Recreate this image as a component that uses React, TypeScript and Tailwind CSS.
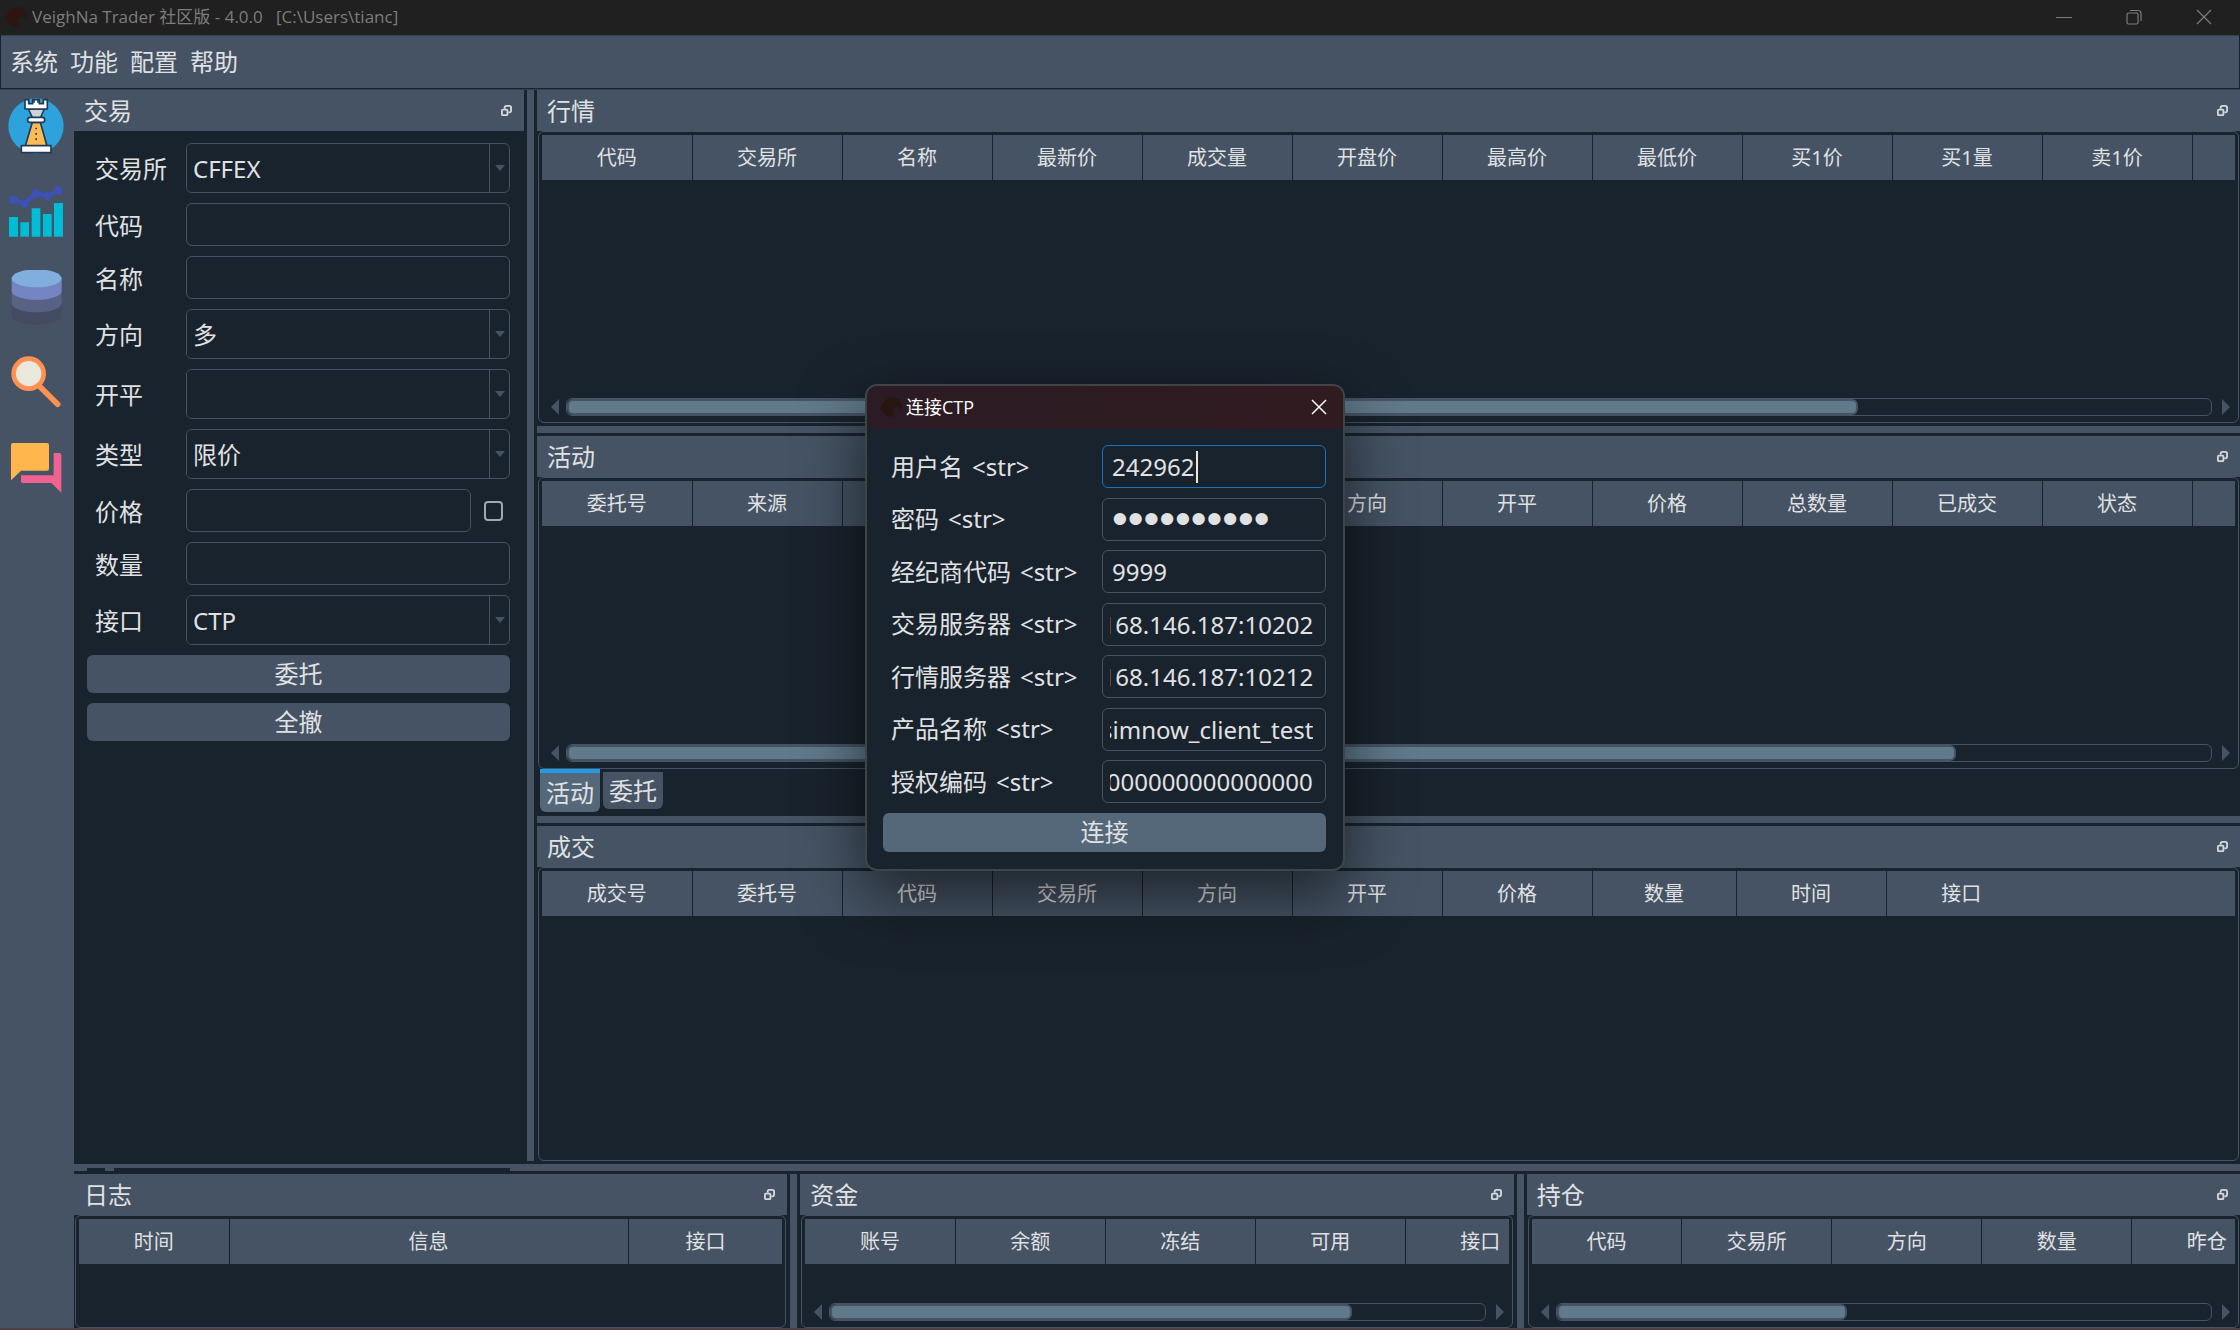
import { useEffect, useRef } from 'react';
import type { ReactNode } from 'react';

type Column = { name: string; width?: number; last?: boolean };

// Most columns share the same default width
const cols = (names: string[]): Column[] => names.map((name) => ({ name, width: 150 }));

const MENUS = ['系统', '功能', '配置', '帮助'];

const TICK_COLUMNS = cols([
  '代码', '交易所', '名称', '最新价', '成交量', '开盘价', '最高价', '最低价', '买1价', '买1量', '卖1价', '',
]);

const ACTIVE_COLUMNS = cols([
  '委托号', '来源', '', '', '', '方向', '开平', '价格', '总数量', '已成交', '状态', '',
]);

const TRADE_COLUMNS: Column[] = [
  ...cols(['成交号', '委托号', '代码', '交易所', '方向', '开平', '价格']),
  { name: '数量', width: 144 },
  { name: '时间', width: 150 },
  { name: '接口', width: 150, last: true },
  { name: '', last: true },
];

const LOG_COLUMNS: Column[] = [
  { name: '时间', width: 150 },
  { name: '信息', width: 399 },
  { name: '接口', last: true },
];

const ACCOUNT_COLUMNS = cols(['账号', '余额', '冻结', '可用', '接口']);
const POSITION_COLUMNS = cols(['代码', '交易所', '方向', '数量', '昨仓']);

const CTP_FIELDS = [
  { id: 'user', label: '用户名', value: '242962', type: 'text', focused: true },
  { id: 'password', label: '密码', value: 'abcdefghij', type: 'password' },
  { id: 'broker', label: '经纪商代码', value: '9999', type: 'text' },
  { id: 'td', label: '交易服务器', value: '180.168.146.187:10202', type: 'text' },
  { id: 'md', label: '行情服务器', value: '180.168.146.187:10212', type: 'text' },
  { id: 'product', label: '产品名称', value: 'simnow_client_test', type: 'text' },
  { id: 'auth', label: '授权编码', value: '0000000000000000', type: 'text' },
];

/* ---------- icons ---------- */

function HorseIcon({ className }: { className: string }) {
  return (
    <svg viewBox="0 0 24 20" className={className} fill="currentColor">
      <path d="M1 13c1-5 4-10 9-12 3-1 7-1 9 1l1-1 .5 3 3 5-1 2.500-2 .500-2-2.500-3 .500c-2 2-1 4-2 6l1 3c-3 1-6 1-9-2-1-1-2-2-2-4l-2 1 .500-2z" />
    </svg>
  );
}

function RookIcon() {
  return (
    <svg viewBox="0 0 168 168" className="h-14 w-14">
      <circle cx="84" cy="84" r="83" fill="#2ea2dc" />
      <g stroke="#1c3b54" strokeWidth="5" strokeLinejoin="round">
        <path d="M61 33h48L97 60H74z" fill="#d0d2d6" />
        <path d="M51 5h11v12h12V5h20v12h12V5h12v28H51z" fill="#fff" />
        <path d="M78 5v9M90 5v9" fill="none" />
        <path d="M73 73h24l20 71H52z" fill="#fdbb55" />
        <rect x="59" y="58" width="51" height="15" rx="7" fill="#fff" />
        <rect x="40" y="143" width="89" height="21" fill="#fff" />
      </g>
      <path d="M82 89h5v5h-5zM82 105h5v5h-5zM82 121h5v5h-5z" fill="#1c3b54" />
    </svg>
  );
}

function ChartIcon() {
  return (
    <svg viewBox="0 0 168 168" className="h-14 w-14">
      <path
        d="M3 99h27v59H3zM37 115h26v43H37zM71 73h26v85H71zM105 90h26v68h-26zM138 57h27v101h-27z"
        fill="#00bcd4"
      />
      <path d="M16 48l34 11 34-32 34 10 34-19" fill="none" stroke="#3f51b5" strokeWidth="13" strokeLinejoin="round" />
      <g fill="#3f51b5">
        <circle cx="16" cy="48" r="13" />
        <circle cx="50" cy="59" r="12" />
        <circle cx="84" cy="28" r="13" />
        <circle cx="118" cy="36" r="12" />
        <circle cx="151" cy="19" r="13" />
      </g>
    </svg>
  );
}

function DatabaseIcon() {
  return (
    <svg viewBox="0 0 168 168" className="h-14 w-14">
      <path d="M11 100v38a75 26 0 0 0 150 0v-38z" fill="#454b62" />
      <path d="M11 62v38a75 27 0 0 0 150 0V62z" fill="#586284" />
      <path d="M11 25v38a75 27 0 0 0 150 0V25z" fill="#7585c3" />
      <ellipse cx="86" cy="25" rx="75" ry="27" fill="#82aedd" />
    </svg>
  );
}

function MagnifierIcon() {
  return (
    <svg viewBox="0 0 168 168" className="h-14 w-14">
      <path d="M90 86l59 59" stroke="#ff9152" strokeWidth="17" strokeLinecap="round" />
      <circle cx="62" cy="53" r="45" fill="#eae8dc" stroke="#ff9152" strokeWidth="14" />
    </svg>
  );
}

function ChatIcon() {
  return (
    <svg viewBox="0 0 168 168" className="h-14 w-14">
      <path d="M137 33h17q6 0 6 6v113l-30-29H44q-5 0-5-5v-18h98z" fill="#f06292" />
      <path d="M15 3h102q6 0 6 6v71q0 6-6 6H39L9 115V9q0-6 6-6z" fill="#ffb74d" />
    </svg>
  );
}

function FloatIcon() {
  return (
    <svg viewBox="0 0 12 12" className="h-[11px] w-[11px]" fill="none" stroke="#d5d8dc" strokeWidth="2">
      <path d="M4 4V3q0-2 2-2h3q2 0 2 2v3q0 2-2 2H8" />
      <rect x="1" y="5" width="6" height="6" rx="1" />
    </svg>
  );
}

/* ---------- dock parts ---------- */

function DockTitle({ title }: { title: string }) {
  return (
    <div className="flex h-[41px] shrink-0 items-center justify-between bg-[#455364] pl-[10px] pr-3">
      <h2 className="text-[24px] leading-8">{title}</h2>
      <button type="button" aria-label={`浮动${title}`}>
        <FloatIcon />
      </button>
    </div>
  );
}

function ScrollBar({ percent }: { percent: number }) {
  return (
    <div className="flex items-center gap-[7px] pb-[6px] pl-[9px] pr-[5px]">
      <svg viewBox="0 0 8 16" className="h-4 w-2 shrink-0" fill="#455364">
        <path d="M8 0v16L0 8z" />
      </svg>
      <div className="h-[18px] flex-1 rounded-md border border-[#455364]">
        <div
          className="h-full rounded-md border-2 border-[#455364] bg-[#60798b]"
          style={{ width: `${percent}%` }}
        />
      </div>
      <svg viewBox="0 0 11 16" className="h-4 w-[11px] shrink-0" fill="#455364">
        <path d="M3 0v16l8-8z" />
      </svg>
    </div>
  );
}

function DataTable({ label, columns, scroll }: { label: string; columns: Column[]; scroll?: number }) {
  return (
    <div className="mx-px flex min-h-0 flex-1 flex-col overflow-hidden rounded-md border border-[#455364] px-[3px] pt-[3px]">
      <div className="min-h-0 flex-1 overflow-hidden">
        <table aria-label={label} className="w-full table-fixed border-collapse">
          <colgroup>
            {columns.map((c, i) => (
              <col key={i} style={c.width ? { width: c.width } : undefined} />
            ))}
          </colgroup>
          <thead>
            <tr className="h-[45px] bg-[#455364]">
              {columns.map((c, i) => (
                <th
                  key={i}
                  className={`p-0 text-[20px] leading-6 font-normal ${c.last ? '' : 'border-r border-[#19232d]'}`}
                >
                  {c.name}
                </th>
              ))}
            </tr>
          </thead>
        </table>
      </div>
      {scroll !== undefined && <ScrollBar percent={scroll} />}
    </div>
  );
}

function Dock({ title, columns, scroll, className, children }: {
  title: string;
  columns: Column[];
  scroll?: number;
  className: string;
  children?: ReactNode;
}) {
  return (
    <section className={`flex min-h-0 min-w-0 flex-col ${className}`}>
      <DockTitle title={title} />
      <DataTable label={title} columns={columns} scroll={scroll} />
      {children}
    </section>
  );
}

/* ---------- trading form ---------- */

const FIELD = 'h-[43px] min-w-0 flex-1 rounded-md border border-[#455364] bg-[#19232d] px-2 text-[24px] outline-none';

function Row({ id, label, children }: { id: string; label: string; children: ReactNode }) {
  return (
    <div className="flex items-center">
      <label htmlFor={id} className="w-[99px] shrink-0 pl-2 pt-[2px] text-[24px] leading-8">
        {label}
      </label>
      {children}
    </div>
  );
}

function Combo({ id, label, value }: { id: string; label: string; value: string }) {
  return (
    <Row id={id} label={label}>
      <div className="flex h-[50px] flex-1 overflow-hidden rounded-md border border-[#455364]">
        <select id={id} className="h-full flex-1 appearance-none bg-[#19232d] pl-[6px] pt-[2px] text-[24px] outline-none" defaultValue={value}>
          <option value={value}>{value}</option>
        </select>
        <span className="flex w-5 items-center justify-center border-l border-[#455364]">
          <svg viewBox="0 0 10 6" className="h-[6px] w-[10px]" fill="#455364">
            <path d="M0 0h10L5 6z" />
          </svg>
        </span>
      </div>
    </Row>
  );
}

function TradingWidget() {
  return (
    <section className="flex w-[450px] shrink-0 flex-col">
      <DockTitle title="交易" />
      <form className="flex flex-col gap-[10px] pl-[13px] pr-[14px] pt-3">
        <Combo id="exchange" label="交易所" value="CFFEX" />
        <Row id="symbol" label="代码">
          <input id="symbol" className={FIELD} />
        </Row>
        <Row id="name" label="名称">
          <input id="name" className={FIELD} />
        </Row>
        <Combo id="direction" label="方向" value="多" />
        <Combo id="offset" label="开平" value="" />
        <Combo id="order-type" label="类型" value="限价" />
        <Row id="price" label="价格">
          <input id="price" className={FIELD} />
          <input
            type="checkbox"
            aria-label="跟随最新价"
            className="ml-[13px] mr-[7px] h-5 w-[19px] appearance-none rounded border-2 border-[#9da9b5]"
          />
        </Row>
        <Row id="volume" label="数量">
          <input id="volume" className={FIELD} />
        </Row>
        <Combo id="gateway" label="接口" value="CTP" />
        <button type="button" className="h-[38px] rounded-md bg-[#455364] text-[24px] leading-8">委托</button>
        <button type="button" className="h-[38px] rounded-md bg-[#455364] text-[24px] leading-8">全撤</button>
      </form>
    </section>
  );
}

/* ---------- connect dialog ---------- */

function ConnectField({ id, label, value, type, focused }: (typeof CTP_FIELDS)[number]) {
  const ref = useRef<HTMLInputElement>(null);
  const long = value.length > 12;

  // Long values show their tail, where the cursor would be
  useEffect(() => {
    if (ref.current) ref.current.scrollLeft = ref.current.scrollWidth;
  }, []);

  return (
    <div className="flex items-center">
      <label htmlFor={id} className="flex w-[219px] shrink-0 gap-[9px] pl-2 text-[24px] leading-8">
        {label}
        <span>&lt;str&gt;</span>
      </label>
      <div className="relative min-w-0 flex-1">
        <input
          ref={ref}
          id={id}
          type={type}
          defaultValue={value}
          className={`block h-[43px] w-full rounded-md border bg-[#19232d] pr-3 outline-none ${
            focused ? 'border-[#1a72bb]' : 'border-[#455364]'
          } ${long ? 'pl-[7px]' : 'pl-[9px]'} ${
            type === 'password' ? "font-['Liberation_Sans',sans-serif] text-[45px]" : 'text-[24px]'
          }`}
        />
        {focused && <span className="absolute left-[94px] top-[6px] h-8 w-[2px] bg-[#f0e6d8]" />}
      </div>
    </div>
  );
}

function ConnectDialog() {
  return (
    <div
      role="dialog"
      aria-label="连接CTP"
      className="absolute left-[865px] top-[384px] w-[480px] overflow-hidden rounded-xl border-2 border-[#3f4449] bg-[#19232d] shadow-[0_24px_64px_0_rgba(0,0,0,0.6)]"
    >
      <div className="flex h-[43px] items-center bg-linear-to-r from-[#2b1b24] to-[#301b20] pb-[2px] pl-3 pr-4 text-white">
        <HorseIcon className="h-5 w-6 text-[#26160f]" />
        <h2 className="ml-[3px] flex-1 font-['Open_Sans','Noto_Sans_CJK_SC',sans-serif] text-[18px] leading-6">连接CTP</h2>
        <button type="button" aria-label="关闭">
          <svg viewBox="0 0 16 16" className="h-4 w-4" stroke="currentColor" strokeWidth="1.500">
            <path d="M1 1l14 14M15 1L1 15" />
          </svg>
        </button>
      </div>
      <form className="flex h-[440px] flex-col justify-between pb-[17px] pl-4 pr-[17px] pt-4">
        {CTP_FIELDS.map((f) => (
          <ConnectField key={f.id} {...f} />
        ))}
        <button type="button" className="h-[39px] rounded-md bg-[#54687a] text-[24px] leading-8">连接</button>
      </form>
    </div>
  );
}

/* ---------- window ---------- */

function TitleBar() {
  return (
    <header className="flex h-[35px] shrink-0 items-center bg-[#202020] pb-[2px] pl-1 text-[#7d7d7d]">
      <HorseIcon className="h-5 w-6 text-[#2e1512]" />
      <h1 className="ml-1 flex-1 font-['Open_Sans','Noto_Sans_CJK_SC',sans-serif] text-[17px] leading-6 whitespace-pre">
        VeighNa Trader 社区版 - 4.0.0   [C:\Users\tianc]
      </h1>
      <div className="flex items-center gap-[54px] pr-7">
        <button type="button" aria-label="最小化">
          <svg viewBox="0 0 16 16" className="h-4 w-4" stroke="currentColor">
            <path d="M0 8.500h16" />
          </svg>
        </button>
        <button type="button" aria-label="还原">
          <svg viewBox="0 0 16 16" className="h-4 w-4" fill="none" stroke="currentColor" strokeWidth="1.200">
            <rect x="1" y="4" width="11" height="11" rx="1.500" />
            <path d="M4 1.500h8q3 0 3 3V12" />
          </svg>
        </button>
        <button type="button" aria-label="关闭">
          <svg viewBox="0 0 16 16" className="h-4 w-4" stroke="currentColor" strokeWidth="1.200">
            <path d="M1 1l14 14M15 1L1 15" />
          </svg>
        </button>
      </div>
    </header>
  );
}

const APPS = [
  { name: 'CTA策略', icon: <RookIcon /> },
  { name: 'CTA回测', icon: <ChartIcon /> },
  { name: '数据管理', icon: <DatabaseIcon /> },
  { name: '查询合约', icon: <MagnifierIcon /> },
  { name: '社区论坛', icon: <ChatIcon /> },
];

export default function App() {
  return (
    <div className="relative flex h-screen flex-col overflow-hidden bg-[#19232d] font-['Noto_Sans','Noto_Sans_CJK_SC',sans-serif] text-[#e0e1e3]">
      <TitleBar />

      <nav className="mx-px flex h-[54px] shrink-0 items-center gap-3 border-y border-[#19232d] border-t-[#34424f] bg-[#455364] pl-[9px]">
        {MENUS.map((m) => (
          <button key={m} type="button" className="text-[24px] leading-8">{m}</button>
        ))}
      </nav>

      <div className="flex min-h-0 flex-1 border-t border-[#34424f]">
        <aside className="flex w-[74px] shrink-0 flex-col items-start gap-[30px] bg-[#455364] pl-2 pt-2">
          {APPS.map((a) => (
            <button key={a.name} type="button" aria-label={a.name}>{a.icon}</button>
          ))}
        </aside>

        <main className="flex min-w-0 flex-1 flex-col">
          <div className="flex min-h-0 flex-1">
            <TradingWidget />
            <div className="mx-[3px] w-[7px] shrink-0 bg-[#455364]" />
            <div className="flex min-w-0 flex-1 flex-col">
              <Dock title="行情" columns={TICK_COLUMNS} scroll={78.5} className="flex-[333]" />
              <div className="my-[3px] h-[7px] shrink-0 bg-[#455364]" />
              <Dock title="活动" columns={ACTIVE_COLUMNS} scroll={84.5} className="flex-[377]">
                <div role="tablist" className="flex h-[44px] shrink-0 items-start gap-[3px] pl-[3px]">
                  <button
                    type="button"
                    role="tab"
                    aria-selected="true"
                    className="h-[43px] w-[60px] rounded-b-md border-t-4 border-[#259ae9] bg-[#54687a] text-[24px] leading-8"
                  >
                    活动
                  </button>
                  <button
                    type="button"
                    role="tab"
                    aria-selected="false"
                    className="mt-[3px] h-[37px] w-[60px] rounded-b-md bg-[#455364] text-[24px] leading-8"
                  >
                    委托
                  </button>
                </div>
              </Dock>
              <div className="my-[3px] h-[7px] shrink-0 bg-[#455364]" />
              <Dock title="成交" columns={TRADE_COLUMNS} className="flex-[335]" />
            </div>
          </div>

          <div className="my-[3px] flex h-[7px] shrink-0 items-end gap-[9px] bg-[#455364] pl-[13px]">
            <span className="h-[3px] w-[18px] bg-[#19232d]" />
            <span className="h-[3px] w-[396px] bg-[#19232d]" />
          </div>

          <div className="flex h-[154px] shrink-0">
            <Dock title="日志" columns={LOG_COLUMNS} className="flex-1" />
            <div className="mx-[3px] w-[7px] shrink-0 bg-[#455364]" />
            <Dock title="资金" columns={ACCOUNT_COLUMNS} scroll={79.7} className="flex-1" />
            <div className="mx-[3px] w-[7px] shrink-0 bg-[#455364]" />
            <Dock title="持仓" columns={POSITION_COLUMNS} scroll={44.4} className="flex-1" />
          </div>
        </main>
      </div>
      <div className="h-[2px] shrink-0 bg-[#4b4046]" />

      <ConnectDialog />
    </div>
  );
}
